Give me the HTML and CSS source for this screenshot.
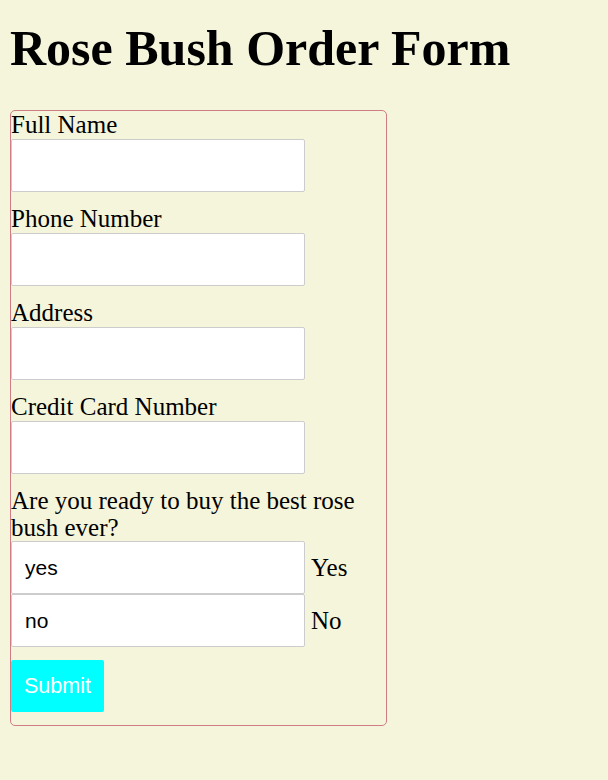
FILE: index.html
```html
<!DOCTYPE html>
<html>
<head>
<meta charset="utf-8">
<link rel="stylesheet" href="styles.css">
</head>
<body>
<h1 class="title">Rose Bush Order Form</h1>
<form class="order">
  <label class="field-label" for="name">Full Name</label>
  <input class="text-input" id="name" type="text">
  <label class="field-label" for="phone">Phone Number</label>
  <input class="text-input" id="phone" type="text">
  <label class="field-label" for="addr">Address</label>
  <input class="text-input" id="addr" type="text">
  <label class="field-label" for="cc">Credit Card Number</label>
  <input class="text-input" id="cc" type="text">
  <p class="question">Are you ready to buy the best rose bush ever?</p>
  <div class="choice"><input class="choice-input" type="text" value="yes"><span class="choice-label">Yes</span></div>
  <div class="choice"><input class="choice-input" type="text" value="no"><span class="choice-label">No</span></div>
  <button class="submit" type="button">Submit</button>
</form>
</body>
</html>
```
FILE: styles.css
```css
html, body {
  background: #f5f5dc;
}
body {
  margin: 0;
  padding: 0 10px;
  font-family: "Liberation Serif", "Times New Roman", serif;
  font-size: 25px;
  color: #000;
}
.title {
  font-size: 50px;
  font-weight: bold;
  margin: 0;
  padding-top: 21px;
  line-height: 55px;
  margin-bottom: 34px;
}
.order {
  width: 375px;
  border: 1px solid #d07c84;
  border-radius: 5px;
  display: flex;
  flex-direction: column;
  align-items: flex-start;
}
.field-label {
  display: block;
  line-height: 28px;
}
.text-input {
  box-sizing: border-box;
  width: 294px;
  height: 53px;
  border: 1px solid #cccccc;
  border-radius: 2px;
  background: #fff;
  margin: 0 0 13px 0;
}
.question {
  margin: 0;
  line-height: 27px;
}
.choice {
  display: flex;
  align-items: center;
  gap: 6px;
}
.choice-input {
  box-sizing: border-box;
  width: 294px;
  height: 53px;
  border: 1px solid #cccccc;
  border-radius: 2px;
  background: #fff;
  margin: 0;
  padding: 0 13px;
  font-family: "Liberation Sans", Arial, sans-serif;
  font-size: 21px;
  color: #000;
}
.choice-label {
  line-height: 28px;
}
.submit {
  box-sizing: border-box;
  width: 93px;
  height: 52px;
  margin: 13px 0 13px 0;
  border: none;
  border-radius: 2px;
  background: #00ffff;
  color: #fff;
  font-family: "Liberation Sans", Arial, sans-serif;
  font-size: 21.5px;
  padding: 0;
}
```
